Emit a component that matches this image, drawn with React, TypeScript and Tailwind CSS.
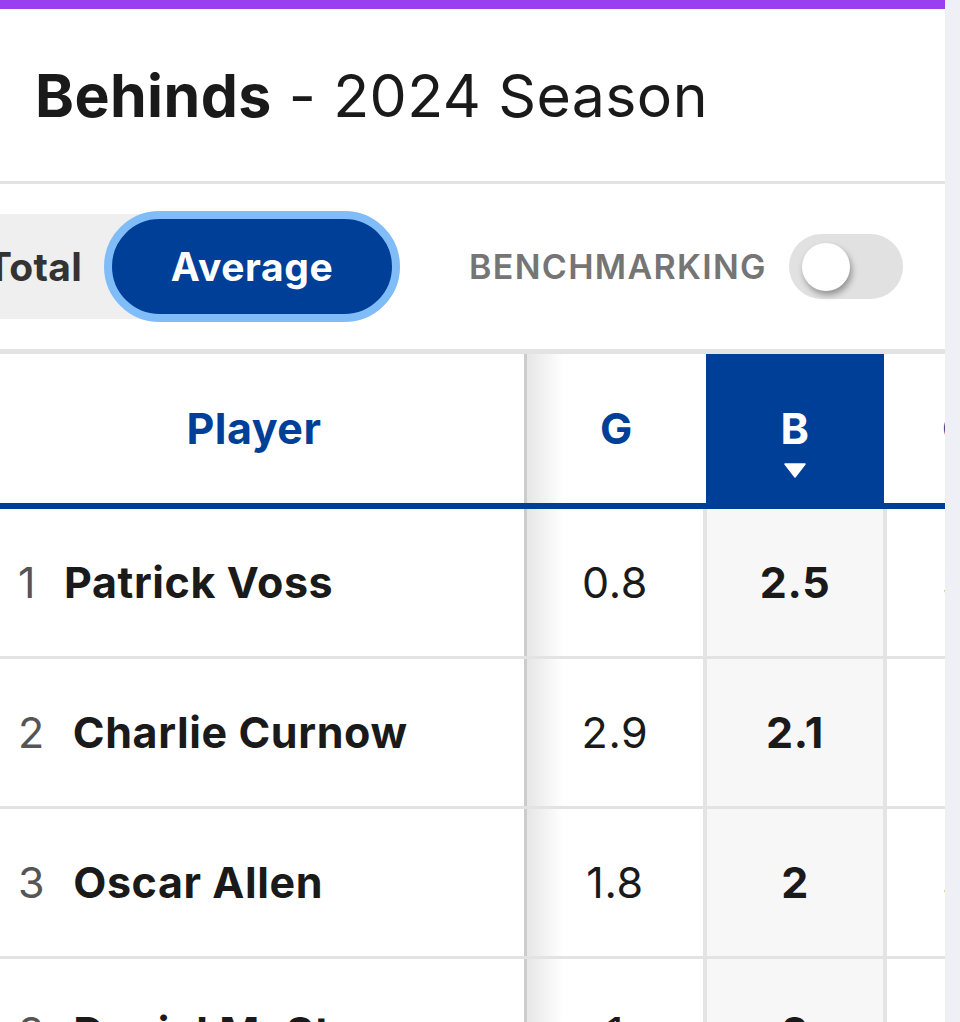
const rows = [
  { rank: 1, name: "Patrick Voss", g: "0.8", b: "2.5", extra: "3.3" },
  { rank: 2, name: "Charlie Curnow", g: "2.9", b: "2.1", extra: "5.0" },
  { rank: 3, name: "Oscar Allen", g: "1.8", b: "2", extra: "3.8" },
  { rank: 3, name: "Daniel McStay", g: "1", b: "2", extra: "3.0" },
];

export default function App() {
  return (
    <div className="w-full min-h-screen bg-[#eff0f5] font-['Inter',sans-serif] text-[#1a1a1a]">
      <div className="w-[945px] h-screen overflow-hidden bg-white">
        <div className="h-[9px] bg-[#9a3ff0]" />

        <header className="h-[175px] flex items-center pl-[35px] border-b-[3px] border-[#e2e2e2]">
          <h1 className="text-[59px] leading-none tracking-[0.4px] whitespace-nowrap">
            <span className="font-bold">Behinds</span>
            <span className="font-normal"> - 2024 Season</span>
          </h1>
        </header>

        <section className="h-[170px] flex items-center border-b-[5px] border-[#e3e3e3]">
          <div className="-ml-[40px] flex items-center h-[105px] bg-[#efefef] rounded-r-full">
            <button type="button" className="pl-[26px] pr-[22px] text-[39px] font-bold text-[#333333] leading-none tracking-[0.3px]">
              Total
            </button>
            <button
              type="button"
              className="-my-[3px] h-[111px] w-[296px] rounded-full border-[8px] border-[#80bdf8] bg-[#003f98] text-white text-[39px] font-bold leading-none tracking-[0.6px]"
            >
              Average
            </button>
          </div>
          <span className="ml-[69px] text-[34px] font-semibold text-[#757575] tracking-[1.3px] leading-none">
            BENCHMARKING
          </span>
          <div className="ml-[22px] relative h-[65px] w-[114px] rounded-full bg-[#e1e1e1]">
            <span className="absolute left-[13px] top-[9px] h-[48px] w-[48px] rounded-full bg-white shadow-[2px_4px_6px_rgba(0,0,0,0.35)]" />
          </div>
        </section>

        <div className="flex h-[155px] border-b-[6px] border-[#003f98] text-[43px] font-bold leading-none tracking-[0.5px] text-[#003f98]">
          <div className="w-[527px] shrink-0 flex items-center justify-center pr-[16px] border-r-[3px] border-[#cccccc]">
            Player
          </div>
          <div className="w-[179px] shrink-0 flex items-center justify-center bg-[linear-gradient(to_right,#e6e6e6,#ffffff_36px)]">
            G
          </div>
          <div className="relative w-[178px] shrink-0 flex items-center justify-center bg-[#003f98] text-white">
            B
            <svg className="absolute left-1/2 -translate-x-1/2 top-[109px]" width="22" height="15" viewBox="0 0 22 15">
              <path d="M1 1 H21 L11 14 Z" fill="#ffffff" stroke="#ffffff" strokeWidth="1.5" strokeLinejoin="round" />
            </svg>
          </div>
          <div className="w-[178px] shrink-0 flex items-center pl-[58px]">G%</div>
        </div>

        {rows.map((row) => (
          <div key={row.name} className="flex h-[150px] border-b-[3px] border-[#e3e3e3] text-[43px] leading-none tracking-[0.6px]">
            <div className="w-[527px] shrink-0 flex items-center pl-[18px] border-r-[3px] border-[#cccccc]">
              <span className="text-[#555555] font-normal">{row.rank}</span>
              <span className="ml-[28px] font-bold whitespace-nowrap">{row.name}</span>
            </div>
            <div className="w-[180px] shrink-0 flex items-center justify-center border-r-[4px] border-[#e4e4e4] bg-[linear-gradient(to_right,#e6e6e6,#ffffff_36px)]">
              {row.g}
            </div>
            <div className="w-[180px] shrink-0 flex items-center justify-center border-r-[4px] border-[#e4e4e4] bg-[#f7f7f7] font-bold">
              {row.b}
            </div>
            <div className="w-[178px] shrink-0 flex items-center pl-[55px] text-[#555555]">{row.extra}</div>
          </div>
        ))}
      </div>
    </div>
  );
}
